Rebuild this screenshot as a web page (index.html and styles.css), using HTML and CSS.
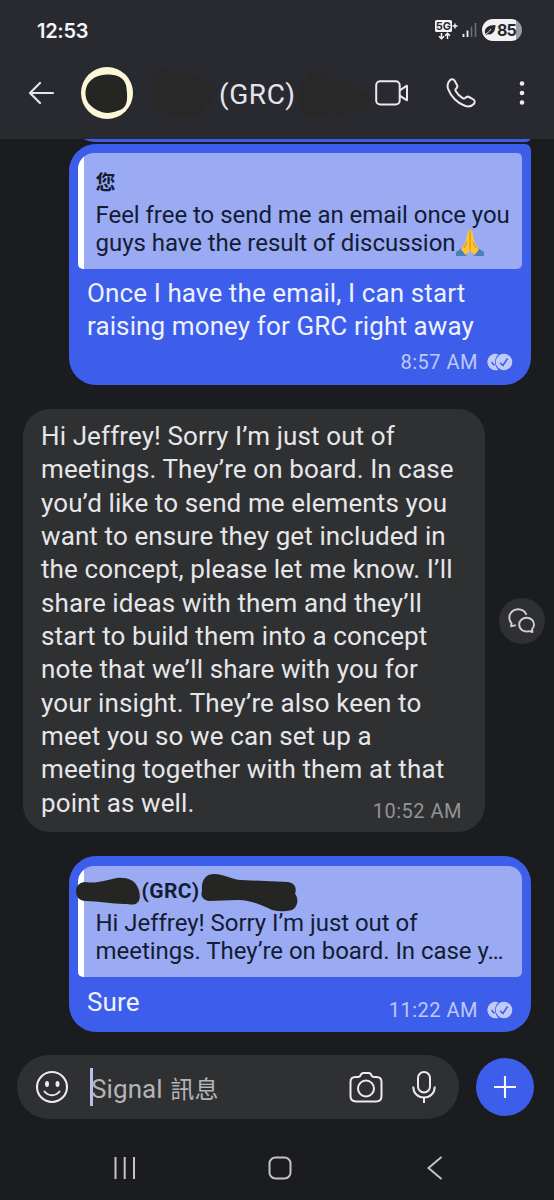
FILE: index.html
```html
<!DOCTYPE html>
<html lang="zh-Hant">
<head>
<meta charset="utf-8">
<title>Signal</title>
<link rel="stylesheet" href="styles.css">
</head>
<body>
<div class="phone">
  <header class="top">
    <div class="status">
      <span class="clock">12:53</span>
      <div class="status-right">
        <svg class="net" width="24" height="21" viewBox="0 0 24 21">
          <rect x="0" y="0" width="17" height="12" rx="1.500" fill="#f4f4f6"/>
          <text x="8.500" y="10" class="net-text">5G</text>
          <path d="M20 3.500v5M17.500 6h5" stroke="#f4f4f6" stroke-width="1.400"/>
          <path d="M6.500 13v5.500M4 16.300l2.500 2.500 2.500-2.500M12.500 19v-5.500M10 15.800l2.500-2.500 2.500 2.500" fill="none" stroke="#f4f4f6" stroke-width="1.500"/>
        </svg>
        <svg class="signal" width="15" height="16" viewBox="0 0 15 16">
          <path d="M1.500 12v3M5.500 8.500v6.500" stroke="#f4f4f6" stroke-width="1.800"/>
          <path d="M9.500 4.500v10.500M13.500 1v14" stroke="#6f7074" stroke-width="1.600"/>
        </svg>
        <div class="battery">
          <svg width="12" height="12" viewBox="0 0 12 12"><path d="M1 9.500C0 4 4 1 11.500 1c0 6-2.500 10-7.500 9.300L1.500 11z" fill="#27282c"/><path d="M0 10.800C3 9.500 5 8 7 5" fill="none" stroke="#f1f1f3" stroke-width="1"/></svg>
          <span>85</span>
        </div>
      </div>
    </div>
    <div class="bar">
      <svg class="back" width="26" height="24" viewBox="0 0 26 24"><path d="M25 12H2M12 2L2 12l10 10" fill="none" stroke="#e4e4ec" stroke-width="2.200" stroke-linecap="round" stroke-linejoin="round"/></svg>
      <svg class="avatar" width="52" height="52" viewBox="0 0 52 52"><circle cx="26" cy="26" r="26" fill="#fdf7d8"/><path d="M26 7.500C36 7 43 11 45 18c1 6 2 14 0 19-2 5-6 6-9 7-5 2-12 3-18 0C9 40 4 34 4.500 25 5 15 13 8 26 7.500z" fill="#252624"/></svg>
      <div class="title">
        <svg class="smudge-a" width="68" height="50" viewBox="0 0 68 50"><path d="M9 1C18 1 28 6 36 6c14-1 18 7 29 14 3 2 2 7-2 10C55 39 51 49 40 49 26 49 14 44 7 40 1 35 3 27 2 20 0 10 2 2 9 1z" fill="#282828"/></svg>
        <h1>(GRC)</h1>
        <svg class="smudge-b" width="76" height="47" viewBox="0 0 76 47"><path d="M20 1c8 0 10 7 18 7 14 1 21 8 31 14 5 4 9 11 3 15-3 4-9 4-16 4-10 1-16 4-25 0-5 3-12 6-19 4C4 42 0 36 1 25 2 17 4 12 9 9c2-5 6-8 11-8z" fill="#282828"/></svg>
      </div>
      <svg class="video" width="34" height="26" viewBox="0 0 34 26"><rect x="1.200" y="1.200" width="23.500" height="23.300" rx="4" fill="none" stroke="#e9e9ee" stroke-width="2"/><path d="M24.700 10.300L32 5.700v14.600l-7.300-4.600" fill="none" stroke="#e9e9ee" stroke-width="2" stroke-linejoin="round"/></svg>
      <svg class="call" width="30" height="30" viewBox="0 0 30 30"><path d="M4 2.200C5.300 1 7.500 1 8.500 2.500L11 7c.8 1.500.2 2.700-.8 3.600-.9.800-1 1.700-.4 2.700 1.700 2.900 4 5.200 6.900 6.900 1 .6 1.900.5 2.700-.4.900-1 2.100-1.600 3.600-.8l4.500 2.500c1.500 1 1.500 3.200.3 4.500-2.400 2.600-5.600 3-9 1.800C11.500 25.200 4.800 18.500 2.200 11.200 1 7.800 1.400 4.600 4 2.200z" fill="none" stroke="#e9e9ee" stroke-width="2" stroke-linejoin="round"/></svg>
      <svg class="more" width="6" height="24" viewBox="0 0 6 24"><g fill="#ececf0"><circle cx="3" cy="2.500" r="2.300"/><circle cx="3" cy="12" r="2.300"/><circle cx="3" cy="21.500" r="2.300"/></g></svg>
    </div>
  </header>

  <main class="chat">
    <div class="bubble out earlier"></div>

    <article class="bubble out first">
      <blockquote class="quote">
        <b class="who">您</b>
        <p>Feel free to send me an email once you<br>guys have the result of discussion<svg class="pray" width="28" height="28" viewBox="0 0 28 28"><path d="M0 27v-4l6-4 6 4-2 4zM28 27v-4l-6-4-6 4 2 4z" fill="#4b7fb8"/><path d="M13.700 1c-2 0-2.500 2-2.700 5L9.500 13 5 20.500 9.500 26l4.500-4zM14.300 1c2 0 2.500 2 2.700 5l1.500 7 4.500 7.500-4.500 5.500-4.500-4z" fill="#fcc437"/><path d="M14 2v20M11 13l-3 6M17 13l3 6" fill="none" stroke="#dc8b20" stroke-width="1"/></svg></p>
      </blockquote>
      <p class="body">Once I have the email, I can start<br>raising money for GRC right away</p>
      <footer class="meta"><time>8:57 AM</time><svg class="read" width="26" height="18" viewBox="0 0 26 18"><path d="M11.500 1.200A8.300 8.300 0 1 0 11.500 16.800 10.500 10.500 0 0 1 11.500 1.200z" fill="#c1cbfa"/><path d="M4.500 9l3 3.500" stroke="#3d5eea" stroke-width="1.600"/><circle cx="17" cy="9" r="8.300" fill="#c1cbfa"/><path d="M13.200 9.700l2.700 2.800 4.700-7" fill="none" stroke="#3d5eea" stroke-width="1.600"/></svg></footer>
    </article>

    <div class="row-in">
      <article class="bubble in">
        <p class="body">Hi Jeffrey! Sorry I’m just out of<br>meetings. They’re on board. In case<br>you’d like to send me elements you<br>want to ensure they get included in<br>the concept, please let me know. I’ll<br>share ideas with them and they’ll<br>start to build them into a concept<br>note that we’ll share with you for<br>your insight. They’re also keen to<br>meet you so we can set up a<br>meeting together with them at that<br>point as well.</p>
        <footer class="meta"><time>10:52 AM</time></footer>
      </article>
      <div class="thread">
        <svg width="28" height="26" viewBox="0 0 28 26"><path d="M18.500 6.800C17 3.300 13.800 1.300 10 1.300c-5 0-8.700 3.700-8.700 8.300 0 2.500.9 4.400 2.300 5.900L3 18.300l4.800-1.200" fill="none" stroke="#cfcfd1" stroke-width="1.900" stroke-linejoin="round"/><path d="M18.700 9.800c4.200 0 7.300 2.800 7.300 6.600 0 2-.8 3.600-2 4.800l.5 2.800-3.500-.9c-5 1.500-9.800-1.600-9.800-6.500 0-3.900 3.200-6.800 7.500-6.800z" fill="none" stroke="#cfcfd1" stroke-width="1.900" stroke-linejoin="round"/></svg>
      </div>
    </div>

    <article class="bubble out last">
      <blockquote class="quote">
        <b class="who grc">(GRC)</b>
        <p>Hi Jeffrey! Sorry I’m just out of<br>meetings. They’re on board. In case y…</p>
        <svg class="scribble" width="224" height="40" viewBox="0 0 224 40"><path d="M10 9c12 2 20-2 32-4 10-1 17 2 20 8 3 5 4 13 1 16-3 4-8 2-14 2-12 0-26-3-38-3C3 28 1 22 1 18c0-5 4-9 9-9zM139 1c11 0 18 6 27 6l47 2c7 1 9 6 7 12 4 4 3 13-3 16-8 2-18 2-24-2-10-4-18-8-30-8l-29 1c-6-1-9-5-7-10-1-10 3-17 12-17z" fill="#252624"/></svg>
      </blockquote>
      <p class="body">Sure</p>
      <footer class="meta"><time>11:22 AM</time><svg class="read" width="26" height="18" viewBox="0 0 26 18"><path d="M11.500 1.200A8.300 8.300 0 1 0 11.500 16.800 10.500 10.500 0 0 1 11.500 1.200z" fill="#c1cbfa"/><path d="M4.500 9l3 3.500" stroke="#3d5eea" stroke-width="1.600"/><circle cx="17" cy="9" r="8.300" fill="#c1cbfa"/><path d="M13.200 9.700l2.700 2.800 4.700-7" fill="none" stroke="#3d5eea" stroke-width="1.600"/></svg></footer>
    </article>
  </main>

  <div class="composer">
    <div class="field">
      <svg class="smile" width="34" height="34" viewBox="0 0 34 34"><circle cx="17" cy="17" r="15" fill="none" stroke="#ececee" stroke-width="2.100"/><ellipse cx="12" cy="14" rx="2" ry="2.900" fill="#ececee"/><ellipse cx="22.500" cy="14" rx="2" ry="2.900" fill="#ececee"/><path d="M9.500 21.500c4 5 11 5 15 0" fill="none" stroke="#ececee" stroke-width="2" stroke-linecap="round"/></svg>
      <span class="caret"></span>
      <span class="hint">Signal <span class="hint-cjk">訊息</span></span>
      <svg class="camera" width="34" height="32" viewBox="0 0 34 32"><path d="M6.500 6H9c1.500 0 2-.5 2.500-1.500C12.200 2.500 13 2 14.500 2h5c1.500 0 2.300.5 3 2.500C23 5.500 23.500 6 25 6h2.500C31 6 32.500 8 32.500 11v14c0 3.500-1.700 5.500-5.500 5.500H7c-3.800 0-5.500-2-5.500-5.500V11c0-3 1.500-5 5-5z" fill="none" stroke="#ececee" stroke-width="2"/><circle cx="17" cy="17.500" r="8" fill="none" stroke="#ececee" stroke-width="2"/></svg>
      <svg class="mic" width="24" height="34" viewBox="0 0 24 34"><rect x="6" y="2" width="12" height="20.500" rx="6" fill="none" stroke="#ececee" stroke-width="2"/><path d="M1.300 16.500v.5c0 6 4.500 10.500 10.700 10.500S22.700 23 22.700 17v-.5M12 27.500V33" fill="none" stroke="#ececee" stroke-width="2"/></svg>
    </div>
    <div class="plus"><svg width="22" height="22" viewBox="0 0 22 22"><path d="M11 0v22M0 11h22" stroke="#f6f7ff" stroke-width="2.100"/></svg></div>
  </div>

  <nav class="nav">
    <svg width="22" height="22" viewBox="0 0 22 22"><path d="M1.500 0v22M10.700 0v22M20 0v22" stroke="#c4c4c6" stroke-width="2"/></svg>
    <svg class="home" width="24" height="24" viewBox="0 0 24 24"><rect x="1.500" y="1.500" width="21" height="21" rx="6" fill="none" stroke="#c4c4c6" stroke-width="2"/></svg>
    <svg width="16" height="24" viewBox="0 0 16 24"><path d="M14.500 1L1.500 12l13 11" fill="none" stroke="#c4c4c6" stroke-width="2"/></svg>
  </nav>
</div>
</body>
</html>
```
FILE: styles.css
```css
* { box-sizing: border-box; }
body {
  margin: 0;
  background: #1b1c20;
  font-family: Roboto, "Noto Sans CJK TC", sans-serif;
  color: #e6e6e8;
}
svg { display: block; flex: none; }
p, h1, blockquote { margin: 0; }
.phone { width: 554px; height: 1200px; display: flex; flex-direction: column; overflow: hidden; }

.top { height: 139px; flex: none; background: #292a2f; }
.status { height: 60px; padding: 0 32px 0 37px; display: flex; align-items: center; justify-content: space-between; }
.clock { font: 600 20px/24px Inter, sans-serif; letter-spacing: -0.3px; color: #f6f6f8; padding-top: 1px; }
.status-right { display: flex; align-items: center; }
.net { margin-right: 3px; }
.net-text { font: 700 11px Inter, sans-serif; fill: #292a2f; text-anchor: middle; }
.signal { margin-right: 5px; }
.battery {
  width: 40px; height: 22px; border-radius: 11px; padding-left: 2px;
  background: linear-gradient(90deg, #f1f1f3 85%, #9c9c9f 85%);
  display: flex; align-items: center; gap: 1px;
}
.battery span { font: 700 16px/22px Inter, sans-serif; letter-spacing: -1px; color: #27282c; }

.bar { display: flex; align-items: center; height: 66px; padding-left: 28px; }
.avatar { margin-left: 27px; }
.title { width: 242px; display: flex; align-items: center; padding-left: 17px; }
.title h1 { width: 77px; font-size: 28px; font-weight: 400; line-height: 34px; letter-spacing: 0.6px; margin-left: 1px; padding-top: 3px; color: #e4e4ec; }
.smudge-b { margin-left: 1px; margin-top: 3px; }
.call { margin-left: 37px; }
.more { margin-left: 43px; }

.chat { height: 916px; flex: none; display: flex; flex-direction: column; overflow: hidden; }
.bubble { width: 462px; flex: none; border-radius: 27px; }
.out { margin-left: 69px; background: #3d5eea; }
.in { background: #2f3032; }
.earlier { height: 60px; margin-top: -57px; border-bottom-right-radius: 5px; }
.first { height: 241px; margin-top: 2px; border-top-right-radius: 6px; padding: 9px; margin-bottom: 24px; }
.last { height: 176px; padding: 10px 9px 9px; margin-top: 24px; }
.quote {
  position: relative;
  height: 116px; padding: 15px 0 0 17.500px;
  border-radius: 16px 5px 5px 5px;
  background: linear-gradient(90deg, #fff 6px, #9aabf3 6px); color: #141c33;
}
.last .quote { height: 111px; border-top-right-radius: 14px; padding-top: 11px; }
.quote p { font-size: 24px; line-height: 28px; letter-spacing: -0.040px; white-space: nowrap; }
.who { display: block; font-size: 20px; line-height: 28px; font-weight: 700; height: 33px; }
.first .who { padding-top: 1px; }
.grc { padding-left: 46px; font-size: 21px; letter-spacing: 0.4px; line-height: 28px; height: 32px; }
.pray { display: inline-block; vertical-align: -6px; margin: -4px 0 0 0; }
.scribble { position: absolute; left: -3px; top: 7px; }
.body { font-size: 26px; line-height: 33.350px; letter-spacing: 0.110px; white-space: nowrap; }
.out .body { padding: 8px 0 0 9px; color: #eef1ff; }
.last .body { padding-top: 9px; }
.meta { display: flex; justify-content: flex-end; align-items: center; gap: 9px; height: 24px; font-size: 20px; letter-spacing: 0.5px; color: #bfc9fa; padding-right: 9px; }
.first .meta { margin-top: 6px; }
.last .meta { margin-top: -21px; }
.row-in { display: flex; align-items: center; gap: 14px; padding-left: 23px; }
.in { height: 423px; padding: 11px 17px 11px 18px; }
.in .meta { color: #929395; margin-top: -21px; padding-right: 6px; }
.thread { width: 46px; height: 46px; border-radius: 50%; background: #2f3032; display: flex; align-items: center; justify-content: center; }

.composer { display: flex; align-items: center; padding-left: 17px; gap: 17px; height: 64px; flex: none; }
.field { width: 442px; height: 64px; border-radius: 32px; background: #2f3032; display: flex; align-items: center; padding-left: 18px; }
.caret { width: 3px; height: 38px; background: #b9bff2; margin: 0 -2px 0 21px; }
.hint { width: 258px; font-size: 26px; line-height: 34px; letter-spacing: 0.1px; color: #b4b4b7; padding-top: 5px; }
.hint-cjk { font-size: 24px; margin-left: 1px; }
.mic { margin-left: 29px; }
.plus { width: 58px; height: 58px; border-radius: 50%; background: #3d5eea; display: flex; align-items: center; justify-content: center; }

.nav { height: 81px; padding: 16px 111px 0 114px; display: flex; align-items: center; justify-content: space-between; }
.home { position: relative; left: -2px; }
```
